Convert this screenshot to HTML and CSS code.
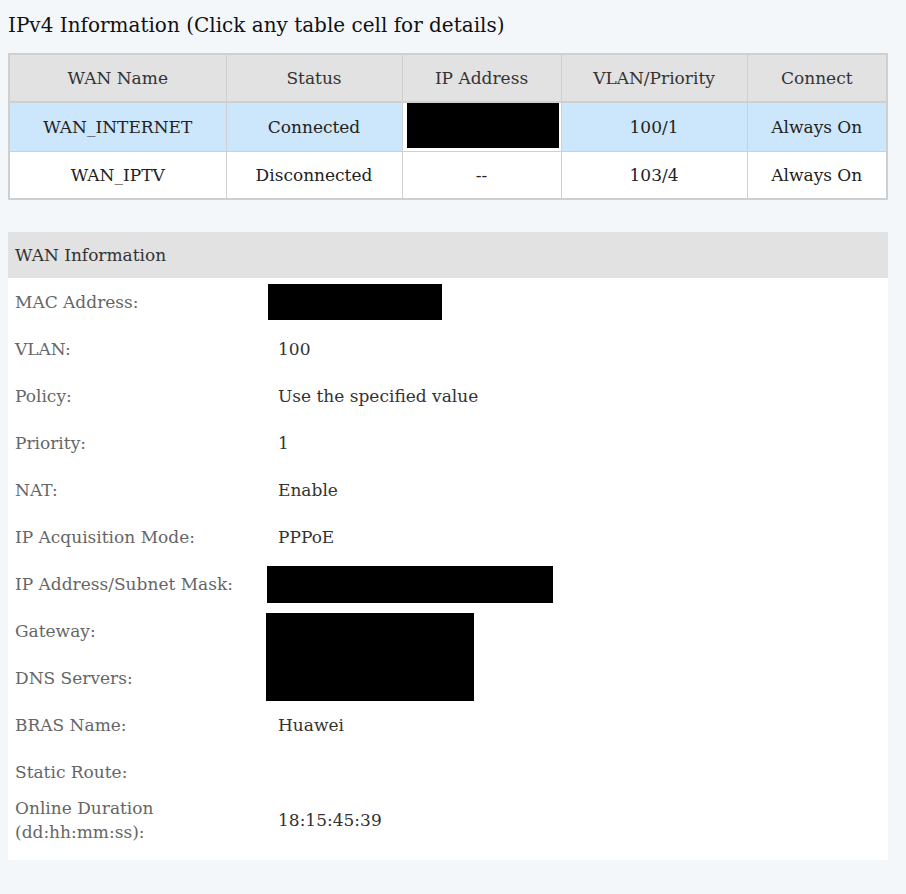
FILE: index.html
```html
<!DOCTYPE html>
<html lang="en">
<head>
    <meta charset="UTF-8">
    <title>WAN Information</title>
    <link rel="stylesheet" href="styles.css">
</head>
<body>

<div class="page">
    <h1 class="title">IPv4 Information (Click any table cell for details)</h1>

    <table class="wan-table">
        <colgroup>
            <col style="width: 217px">
            <col style="width: 176px">
            <col style="width: 159px">
            <col style="width: 186px">
            <col>
        </colgroup>
        <thead>
            <tr>
                <th>WAN Name</th>
                <th>Status</th>
                <th>IP Address</th>
                <th>VLAN/Priority</th>
                <th>Connect</th>
            </tr>
        </thead>
        <tbody>
            <tr class="selected">
                <td>WAN_INTERNET</td>
                <td>Connected</td>
                <td class="hidden-cell"><span class="redact"></span></td>
                <td>100/1</td>
                <td>Always On</td>
            </tr>
            <tr>
                <td>WAN_IPTV</td>
                <td>Disconnected</td>
                <td>--</td>
                <td>103/4</td>
                <td>Always On</td>
            </tr>
        </tbody>
    </table>

    <div class="panel">
        <div class="panel-head">WAN Information</div>
        <div class="info">
            <div class="row">
                <div class="label">MAC Address:</div>
                <div class="value"><span class="redact mac"></span></div>
            </div>
            <div class="row">
                <div class="label">VLAN:</div>
                <div class="value">100</div>
            </div>
            <div class="row">
                <div class="label">Policy:</div>
                <div class="value">Use the specified value</div>
            </div>
            <div class="row">
                <div class="label">Priority:</div>
                <div class="value">1</div>
            </div>
            <div class="row">
                <div class="label">NAT:</div>
                <div class="value">Enable</div>
            </div>
            <div class="row">
                <div class="label">IP Acquisition Mode:</div>
                <div class="value">PPPoE</div>
            </div>
            <div class="row">
                <div class="label">IP Address/Subnet Mask:</div>
                <div class="value"><span class="redact ip"></span></div>
            </div>
            <div class="row">
                <div class="label">Gateway:</div>
                <div class="value"><span class="redact gw"></span></div>
            </div>
            <div class="row">
                <div class="label">DNS Servers:</div>
                <div class="value"></div>
            </div>
            <div class="row">
                <div class="label">BRAS Name:</div>
                <div class="value">Huawei</div>
            </div>
            <div class="row">
                <div class="label">Static Route:</div>
                <div class="value"></div>
            </div>
            <div class="row tall">
                <div class="label">Online Duration<br>(dd:hh:mm:ss):</div>
                <div class="value">18:15:45:39</div>
            </div>
        </div>
    </div>
</div>

</body>
</html>
```

FILE: styles.css
```css
body {
    margin: 0;
    background: #f4f7fa;
    font-family: "DejaVu Serif", serif;
    color: #333;
}
.page {
    width: 880px;
    padding: 12px 0 0 8px;
}
.title {
    margin: 0 0 15px;
    font-size: 20px;
    font-weight: normal;
    line-height: 26px;
    color: #111;
}

/* summary table */
.wan-table {
    width: 880px;
    border-collapse: collapse;
    table-layout: fixed;
    border: 2px solid #cfcfcf;
    background: #fff;
    font-size: 17px;
}
.wan-table th,
.wan-table td {
    height: 46px;
    padding: 0;
    border: 1px solid #d0d0d0;
    text-align: center;
    font-weight: normal;
    color: #222;
}
.wan-table th {
    background: #e2e2e2;
    color: #333;
    border-bottom: 2px solid #cfcfcf;
}
.wan-table .selected td {
    background: #cce7fb;
}
.wan-table .selected td.hidden-cell {
    background: #fff;
    padding: 0 2px 2px 4px;
    vertical-align: top;
}
.hidden-cell .redact {
    display: block;
    height: 45px;
    background: #000;
}

/* detail panel */
.panel {
    margin-top: 32px;
    background: #fff;
}
.panel-head {
    height: 46px;
    line-height: 46px;
    padding-left: 7px;
    background: #e2e2e2;
    font-size: 17px;
    color: #333;
}
.info {
    padding-bottom: 15px;
}
.row {
    display: flex;
    align-items: center;
    min-height: 47px;
    font-size: 17px;
}
.label {
    width: 253px;
    padding-left: 7px;
    color: #666;
    line-height: 24px;
}
.value {
    position: relative;
    flex: 1;
    padding-left: 10px;
    color: #333;
}
.row.tall {
    min-height: 50px;
}

/* blacked-out values */
.redact {
    background: #000;
}
.value .redact {
    position: absolute;
    top: 50%;
}
.redact.mac {
    left: 0;
    width: 174px;
    height: 36px;
    margin-top: -18px;
}
.redact.ip {
    left: -1px;
    width: 286px;
    height: 37px;
    margin-top: -18px;
}
.redact.gw {
    left: -2px;
    width: 208px;
    height: 88px;
    margin-top: -18px;
}
```
